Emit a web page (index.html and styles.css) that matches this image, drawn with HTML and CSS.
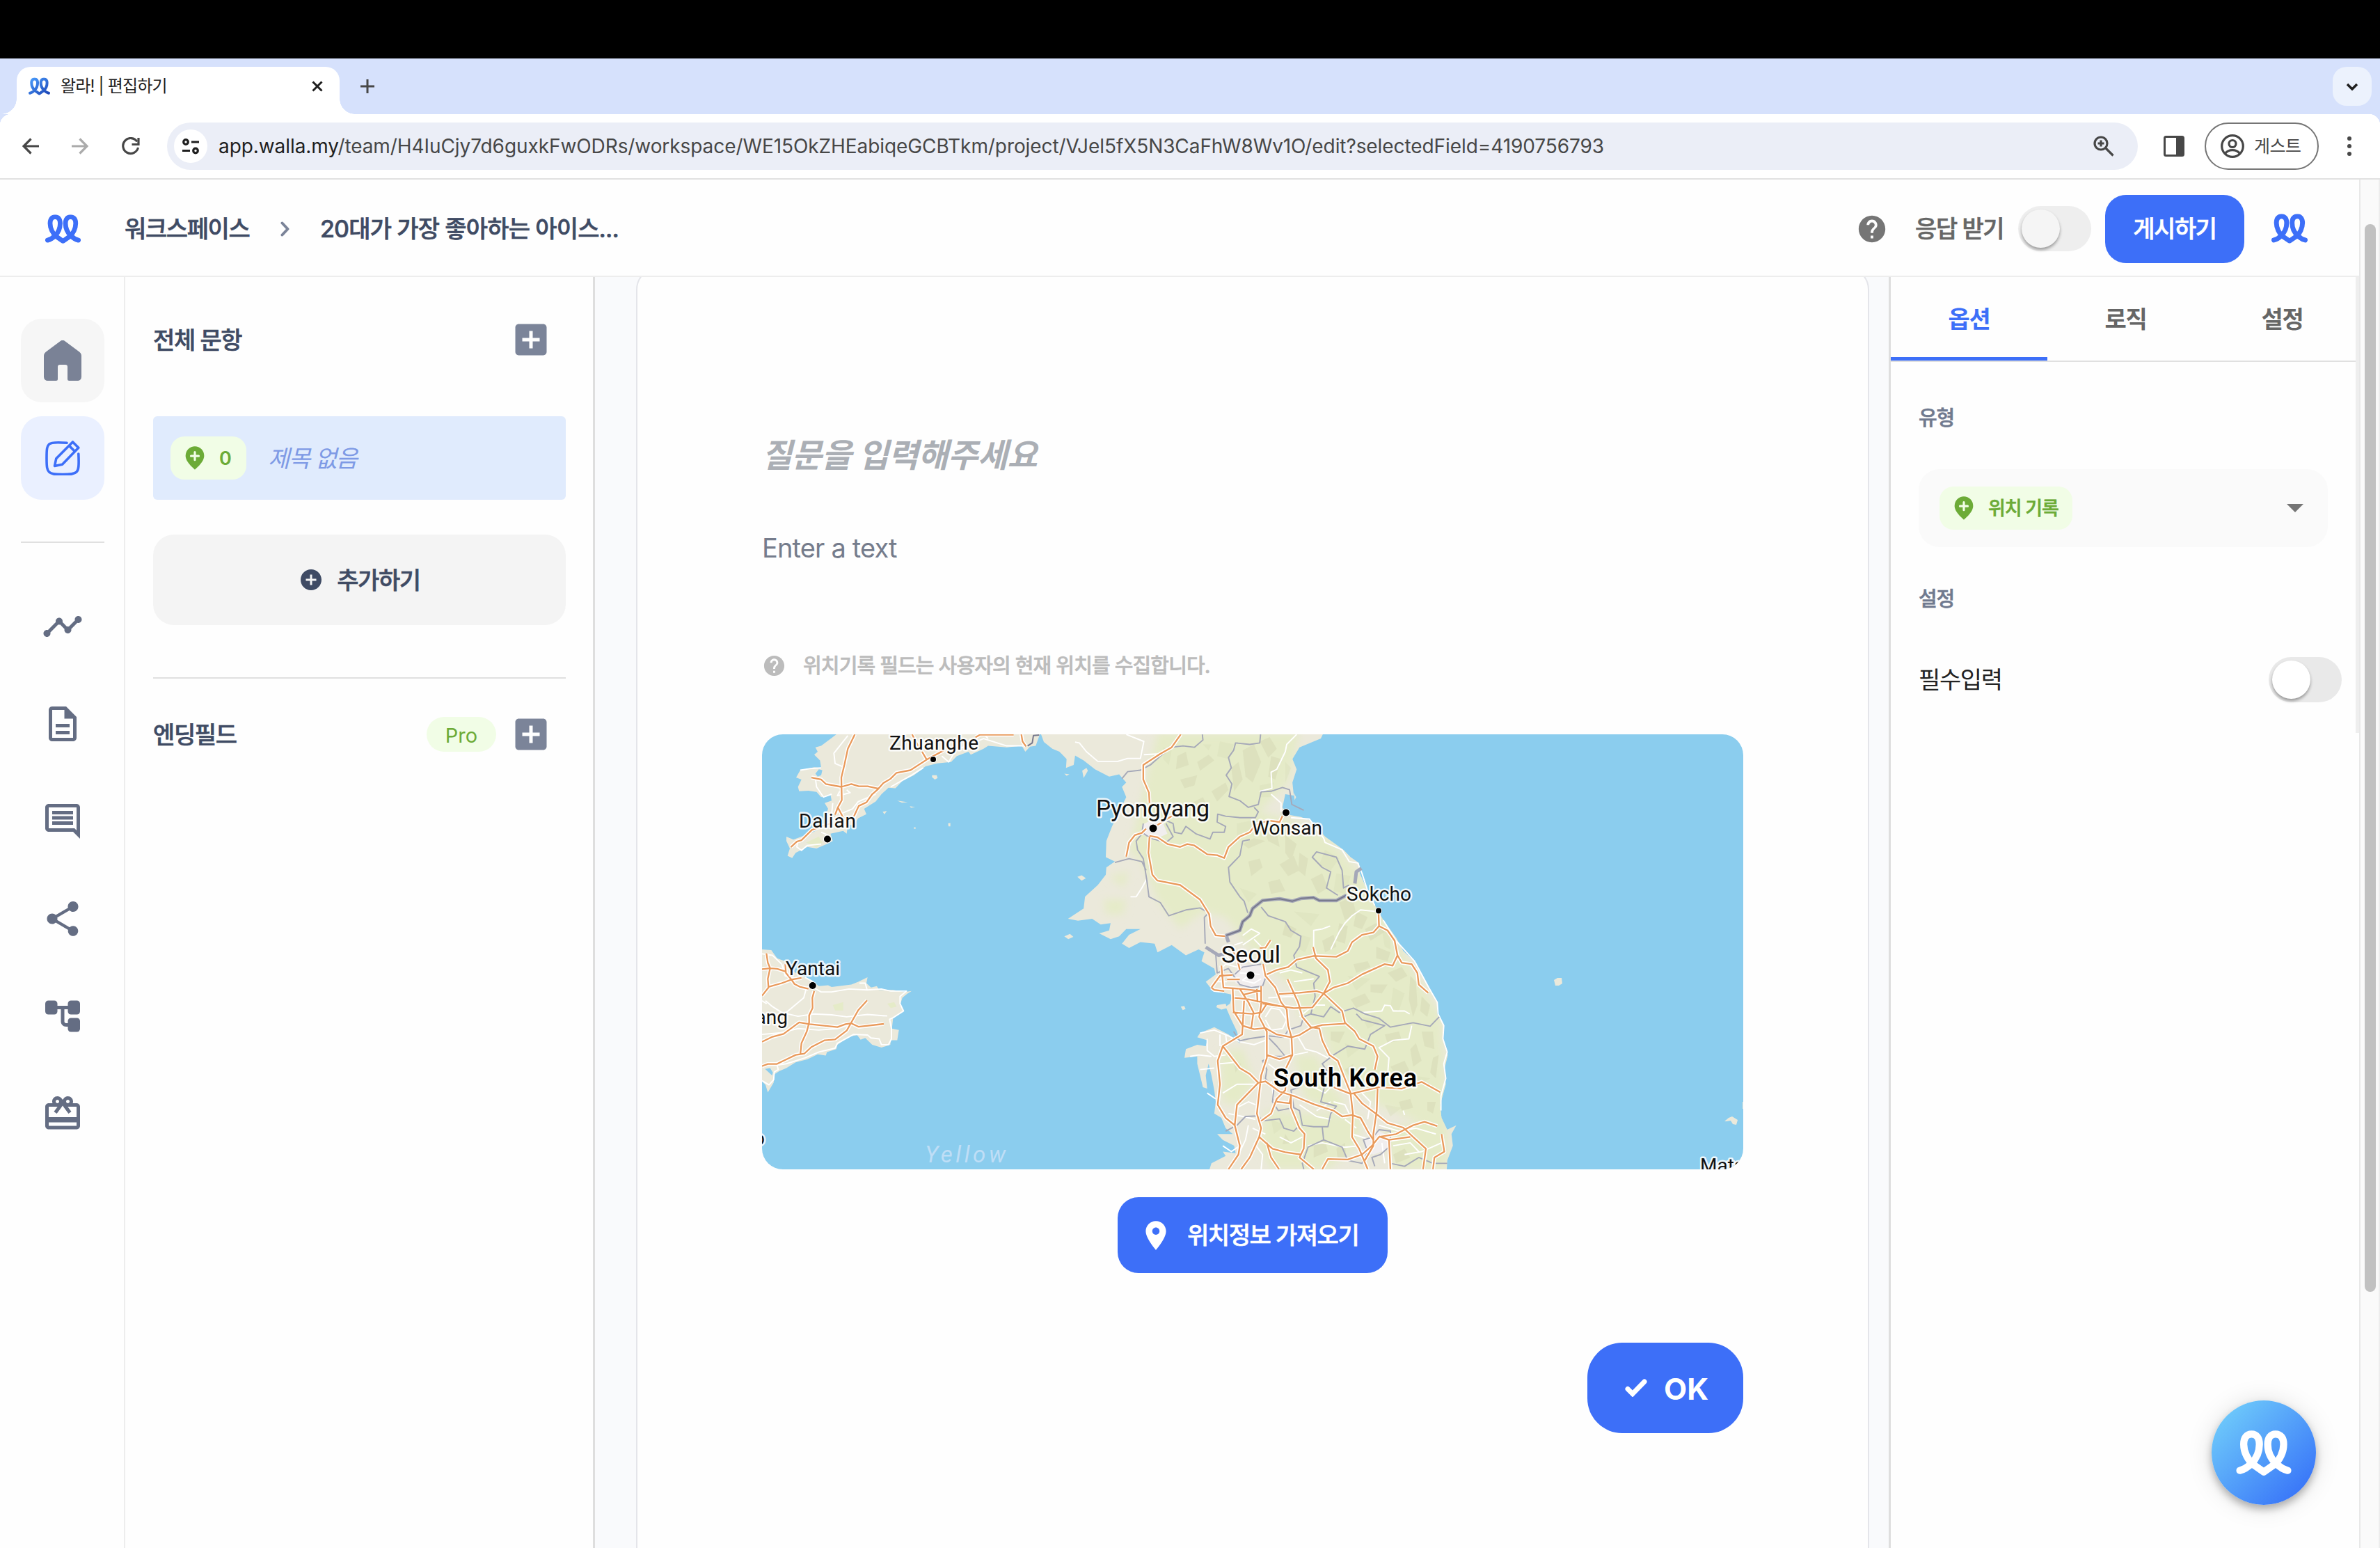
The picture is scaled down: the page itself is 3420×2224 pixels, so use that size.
FILE: index.html
```html
<!DOCTYPE html>
<html lang="ko">
<head>
<meta charset="utf-8">
<title>왈라! | 편집하기</title>
<link rel="stylesheet" href="styles.css">
</head>
<body>
<svg class="sprite" width="0" height="0" aria-hidden="true">
  <defs>
    <linearGradient id="favGrad" x1="0" y1="0" x2="1" y2="1"><stop offset="0" stop-color="#4a9bfb"/><stop offset="1" stop-color="#1c47b8"/></linearGradient>
    <symbol id="walla" viewBox="0 0 240 196">
      <path fill="none" stroke-linecap="round" stroke-linejoin="round" d="M16 174C32 170 48 162 66 144C86 124 101 95 101 60C101 32 88 16 67 16C46 16 33 32 33 60C33 95 52 130 74 148L120 180L166 148C188 130 206 95 206 60C206 32 192 16 171 16C150 16 137 32 137 60C137 95 152 124 174 144C192 162 208 170 224 174"/>
    </symbol>
    <symbol id="help" viewBox="0 0 24 24"><path d="M12 2C6.48 2 2 6.48 2 12s4.48 10 10 10 10-4.48 10-10S17.52 2 12 2zm1 17h-2v-2h2v2zm2.07-7.75-.9.92C13.45 12.9 13 13.5 13 15h-2v-.5c0-1.1.45-2.1 1.17-2.83l1.24-1.26c.37-.36.59-.86.59-1.41 0-1.1-.9-2-2-2s-2 .9-2 2H8c0-2.210 1.790-4 4-4s4 1.790 4 4c0 .88-.36 1.680-.93 2.250z"/></symbol>
    <symbol id="addbox" viewBox="0 0 24 24"><path d="M19 3H5c-1.110 0-2 .9-2 2v14c0 1.100.89 2 2 2h14c1.100 0 2-.9 2-2V5c0-1.100-.9-2-2-2zm-2 10h-4v4h-2v-4H7v-2h4V7h2v4h4v2z"/></symbol>
    <symbol id="addpin" viewBox="0 0 24 24"><path d="M12 2c-4.200 0-8 3.220-8 8.200 0 3.320 2.670 7.250 8 11.800 5.330-4.550 8-8.480 8-11.800C20 5.220 16.200 2 12 2z"/><path d="M12 7v6.600M8.700 10.300h6.600" fill="none" stroke="#f1fde6" stroke-width="1.900" stroke-linecap="round"/></symbol>
  </defs>
</svg>

<div class="menubar"></div>

<div class="tabstrip">
  <div class="tab">
    <svg class="favicon" viewBox="0 0 240 196"><use href="#walla"/></svg>
    <span class="tab-title">왈라! | 편집하기</span>
    <svg class="tab-close" viewBox="0 0 16 16"><path d="M1.500 1.500l13 13M14.500 1.500l-13 13"/></svg>
  </div>
  <svg class="tab-new" viewBox="0 0 20 20"><path d="M10 0v20M0 10h20"/></svg>
  <div class="tab-search"><svg viewBox="0 0 18 11"><path d="M2 2l7 7 7-7"/></svg></div>
</div>

<div class="toolbar">
  <svg class="nav-icon" viewBox="0 0 24 24"><path d="M24 12H2M12.500 1.500L2 12l10.500 10.500"/></svg>
  <svg class="nav-icon nav-forward" viewBox="0 0 24 24"><path d="M0 12h22M11.500 1.500L22 12 11.500 22.500"/></svg>
  <svg class="nav-icon nav-reload" viewBox="0 0 26 26"><path d="M22 6.500A11 11 0 1 0 23.500 15"/><path d="M24 1v9.500h-9.500"/></svg>
  <div class="omnibox">
    <div class="site-info"><svg viewBox="0 0 24 24"><circle cx="5" cy="6" r="3.300"/><path d="M13 6h11M0 18.500h11"/><circle cx="19" cy="18.500" r="3.300"/></svg></div>
    <span class="url"><b>app.walla.my</b>/team/H4IuCjy7d6guxkFwODRs/workspace/WE15OkZHEabiqeGCBTkm/project/VJel5fX5N3CaFhW8Wv1O/edit?selectedField=4190756793</span>
    <svg class="magnifier" viewBox="0 0 30 30"><circle cx="11" cy="11" r="9"/><path d="M18 18l10.500 10.500M11 6.500v9M6.500 11h9"/></svg>
  </div>
  <svg class="side-panel" viewBox="0 0 30 30"><rect x="1.500" y="1.500" width="27" height="27" rx="2"/><path d="M18 1h10v28H18z"/></svg>
  <div class="guest">
    <svg viewBox="0 0 34 34"><circle cx="17" cy="17" r="15.300"/><circle cx="17" cy="13.500" r="5"/><path d="M6.500 27.500c5-6.500 16-6.500 21 0"/></svg>
    <span>게스트</span>
  </div>
  <svg class="kebab" viewBox="0 0 8 30"><circle cx="4" cy="4" r="3"/><circle cx="4" cy="15" r="3"/><circle cx="4" cy="26" r="3"/></svg>
</div>

<div class="page">
  <div class="app">
    <header class="header">
      <svg class="logo" viewBox="0 0 240 196"><use href="#walla"/></svg>
      <span class="crumb">워크스페이스</span>
      <svg class="crumb-sep" viewBox="0 0 13 22"><path d="M2.500 2.500L10.500 11l-8 8.500"/></svg>
      <span class="crumb crumb-current">20대가 가장 좋아하는 아이스...</span>
      <div class="header-actions">
        <svg class="header-help"><use href="#help"/></svg>
        <span class="accept">응답 받기</span>
        <div class="switch switch-disabled"><i></i></div>
        <button class="publish">게시하기</button>
        <svg class="logo logo-right" viewBox="0 0 240 196"><use href="#walla"/></svg>
      </div>
    </header>

    <div class="workspace">
      <nav class="rail">
        <a class="rail-btn"><svg class="home" viewBox="0 0 54 58"><path d="M23.500 1.200a5.500 5.500 0 0 1 7 0L51 16.500a7 7 0 0 1 3 5.500v30.500a5.500 5.500 0 0 1-5.500 5.500H36.500a2.500 2.500 0 0 1-2.500-2.500V38a3 3 0 0 0-3-3h-8a3 3 0 0 0-3 3v17.500a2.500 2.500 0 0 1-2.500 2.500H5.500A5.500 5.500 0 0 1 0 52.500V22a7 7 0 0 1 3-5.500z"/></svg></a>
        <a class="rail-btn rail-active"><svg class="edit" viewBox="0 0 50 50"><path d="M31 3.300C19 2.300 8.500 2.300 5.500 5.200S2 12 2 25s.5 17 3.500 20S13 48.500 25 48.500 42 48 45 45s3.600-8.500 2.800-26"/><path d="M13.500 36.500l2.300-10.800L39.500 2l8.300 8.200L24.500 34.200zM34.500 7.500l8 8"/></svg></a>
        <div class="rail-line"></div>
        <a class="rail-item"><svg viewBox="0 0 24 24"><path d="M23 8c0 1.100-.9 2-2 2-.18 0-.35-.02-.51-.07l-3.560 3.550c.05.16.07.34.07.52 0 1.100-.9 2-2 2s-2-.9-2-2c0-.18.02-.36.07-.52l-2.550-2.550c-.16.05-.34.07-.52.07s-.36-.02-.52-.07l-4.550 4.560c.05.16.07.33.07.51 0 1.100-.9 2-2 2s-2-.9-2-2 .9-2 2-2c.18 0 .35.02.51.07l4.560-4.550C8.020 9.360 8 9.180 8 9c0-1.100.9-2 2-2s2 .9 2 2c0 .18-.02.36-.07.52l2.550 2.550c.16-.05.34-.07.52-.07s.36.02.52.07l3.550-3.560C19.020 8.350 19 8.180 19 8c0-1.100.9-2 2-2s2 .9 2 2z"/></svg></a>
        <a class="rail-item"><svg viewBox="0 0 24 24"><path d="M8 16h8v2H8zm0-4h8v2H8zm6-10H6c-1.100 0-2 .9-2 2v16c0 1.100.89 2 1.990 2H18c1.100 0 2-.9 2-2V8l-6-6zm4 18H6V4h7v5h5v11z"/></svg></a>
        <a class="rail-item"><svg viewBox="0 0 24 24"><path d="M21.990 4c0-1.100-.89-2-1.990-2H4c-1.100 0-2 .9-2 2v12c0 1.100.9 2 2 2h14l4 4-.01-18zM20 4v13.170L18.830 16H4V4h16zM6 12h12v2H6zm0-3h12v2H6zm0-3h12v2H6z"/></svg></a>
        <a class="rail-item"><svg viewBox="0 0 24 24"><path d="M18 16.080c-.76 0-1.440.3-1.960.77L8.910 12.700c.05-.23.09-.46.09-.7s-.04-.47-.09-.7l7.050-4.110c.54.5 1.250.81 2.040.81 1.660 0 3-1.340 3-3s-1.340-3-3-3-3 1.340-3 3c0 .24.04.47.09.7L8.040 9.810C7.500 9.310 6.790 9 6 9c-1.660 0-3 1.340-3 3s1.340 3 3 3c.79 0 1.500-.31 2.040-.81l7.120 4.160c-.05.21-.08.43-.08.65 0 1.610 1.310 2.920 2.920 2.920s2.920-1.310 2.920-2.920-1.310-2.920-2.920-2.920z"/></svg></a>
        <a class="rail-item"><svg viewBox="0 0 24 24"><rect x="2" y="3" width="7" height="8" rx="1.800"/><rect x="15" y="3" width="7" height="8" rx="1.800"/><rect x="15" y="13" width="7" height="8" rx="1.800"/><path d="M8 6h8v2h-3v7c0 .6.400 1 1 1h2v2h-2c-1.700 0-3-1.300-3-3V8H8z"/></svg></a>
        <a class="rail-item"><svg viewBox="0 0 24 24"><path d="M20 6h-2.180c.11-.31.18-.65.18-1 0-1.660-1.340-3-3-3-1.050 0-1.960.54-2.500 1.350l-.5.67-.5-.68C10.960 2.540 10.050 2 9 2 7.340 2 6 3.340 6 5c0 .35.07.69.18 1H4c-1.110 0-1.990.89-1.990 2L2 19c0 1.110.89 2 2 2h16c1.110 0 2-.89 2-2V8c0-1.110-.89-2-2-2zm-5-2c.55 0 1 .45 1 1s-.45 1-1 1-1-.45-1-1 .45-1 1-1zM9 4c.55 0 1 .45 1 1s-.45 1-1 1-1-.45-1-1 .45-1 1-1zm11 15H4v-2h16v2zm0-5H4V8h5.080L7 10.830 8.620 12 11 8.760l1-1.360 1 1.360L15.380 12 17 10.830 14.920 8H20v6z"/></svg></a>
      </nav>

      <aside class="fields">
        <div class="fields-head"><h2>전체 문항</h2><svg class="addbox"><use href="#addbox"/></svg></div>
        <div class="question">
          <span class="q-badge"><svg><use href="#addpin"/></svg>0</span>
          <em>제목 없음</em>
        </div>
        <button class="add"><svg viewBox="0 0 24 24"><path d="M12 2C6.480 2 2 6.480 2 12s4.480 10 10 10 10-4.480 10-10S17.520 2 12 2zm5 11h-4v4h-2v-4H7v-2h4V7h2v4h4v2z"/></svg><span>추가하기</span></button>
        <div class="fields-head fields-ending"><h2>엔딩필드</h2><span class="pro">Pro</span><svg class="addbox"><use href="#addbox"/></svg></div>
      </aside>

      <main class="canvas">
        <section class="card">
          <h1 class="q-title">질문을 입력해주세요</h1>
          <p class="q-desc">Enter a text</p>
          <div class="hint"><svg><use href="#help"/></svg><span>위치기록 필드는 사용자의 현재 위치를 수집합니다.</span></div>
          <svg class="map" viewBox="0 0 1410 625">
            <defs>
              <filter id="soft" x="-20%" y="-20%" width="140%" height="140%"><feGaussianBlur stdDeviation="14"/></filter>
              <path id="korea" d="M-12 30L0 62 30 85 55 95 80 120 78 150 105 140 110 108 140 125 180 155 230 180 265 172 290 200 275 215 290 250 270 290 240 350 220 400 218 455 250 470 220 490 218 515 190 550 145 590 140 630 85 665 120 672 170 665 200 685 235 680 230 705 195 715 235 735 265 725 290 700 340 700 300 720 275 750 300 765 340 745 390 750 400 780 450 755 500 790 545 770 565 780 555 810 600 835 605 855 570 880 590 905 620 915 665 925 655 955 640 965 660 1010 680 1050 690 1090 650 1060 600 1035 550 1055 540 1070 575 1080 570 1100 540 1095 500 1110 495 1140 540 1135 540 1160 550 1200 560 1240 575 1245 570 1200 580 1160 590 1200 600 1250 605 1290 600 1330 625 1345 640 1380 665 1400 610 1400 630 1420 670 1440 675 1465 630 1460 640 1475 590 1500 580 1530H1418L1420 1490 1440 1440 1435 1400 1452 1370 1420 1385 1400 1345 1395 1300 1415 1230 1410 1180 1422 1130 1405 1080 1408 1025 1385 990 1385 950 1355 900 1310 815 1265 775 1240 730 1195 670 1160 610 1135 560 1112 510 1110 475 1080 455 1055 430 990 385 940 330 905 318 860 310 840 285 850 240 880 245 875 200 890 155 875 120 900 80 975 50 985 30z"/>
              <clipPath id="koreaClip"><use href="#korea"/></clipPath>
              <g id="highwaysWest">
                <path d="M445 36L415 85 400 140 387 183 389 260 372 285 360 310M372 285L395 320M258 183L300 190 320 205 387 215 430 205 462 213 500 213 548 221M830 90L755 122 685 158 625 167 598 188 568 202 545 223 520 240 495 268 462 280 440 318M755 122L735 95M692 36L718 75M965 46L985 37H1130M1163 36L1168 60 1183 77M340 340L300 350 260 362 215 397 195 402 170 420M45 837L80 834 110 836 145 845M64 783L70 815 80 834 70 870 73 900 45 928M73 898L130 885 172 873 215 867M145 820L148 850 172 873 185 888 210 898 245 904M270 912L262 935 263 970 248 995 248 1020 238 1050 215 1090 210 1130M45 1085L90 1068 138 1058 205 1019 250 1025 370 1035 405 1025 430 1022 462 1034 570 1024M45 1168L70 1161H108L150 1145 190 1130 228 1125 258 1103 315 1080 360 1077 410 1047 460 977 498 944"/>
              </g>
              <g id="highways">
                <path d="M482 36L450 80 410 102 350 140V190L370 235 372 270M372 385L368 440 382 515 400 535 480 550 550 600 582 650 587 690 605 722 638 725M372 382L400 387 435 410 480 420 505 410 530 415 575 445 610 448 635 458 650 420 690 385 725 370 745 345 790 330 830 335 840 315M290 453L300 405 320 380 345 372 360 358M400 345L450 315"/>
                <path d="M1178 640L1180 690 1210 705 1235 740 1245 790 1260 815 1295 820 1315 850 1320 890 1353 918M1180 690L1160 712 1120 720 1085 745 1070 775 1030 795 950 792 890 805 860 830 820 840 785 855M948 762L958 800 1000 840 1007 880 985 920 1050 980 1060 1020 1095 1050 1110 1075 1160 1100 1175 1135 1165 1180M1245 790L1228 825 1200 820 1120 855 1070 885 1020 900 985 920 945 968 880 970 830 963 770 955M985 920L960 912 900 918 828 922M858 872L895 950 910 1000 940 1035 970 1040 980 1080 1005 1130 1035 1150 1055 1200 1080 1260"/>
                <path d="M772 820L780 860 815 900 835 950 855 975 860 1030 872 1070 875 1130 850 1180M872 1070L900 1062 940 1038 980 1028 1060 1023M590 900L620 860 665 857M625 825L632 900 700 905 765 912M665 905L668 980 700 1030 698 1060 630 1100 612 1150 620 1230 612 1300 640 1345 672 1370 690 1440 685 1470 650 1520M672 935L720 940 830 963M690 905L720 950 738 985 730 1040M665 985L735 990 765 985 785 955M705 945L700 1030 740 1042 780 1038 820 1060 872 1070M765 895V960L758 1000 785 1050V1140L765 1200 750 1330 765 1380 758 1410 725 1480 695 1520M750 905L752 950M590 900L600 908 635 912M660 765L680 800 690 840M760 765L780 765 798 738M645 872H690M700 925L760 910M785 1130L830 1145 875 1130M630 1100L690 1175 725 1195 755 1225 780 1220 830 1255 880 1270 950 1298 1020 1320 1050 1340 1085 1335 1115 1345 1140 1390 1160 1420M755 1225L680 1300 672 1370M765 1355L800 1330 820 1280 850 1250 855 1180M870 1270L870 1310 900 1380 918 1400 915 1450 900 1480 950 1520M820 1290L865 1295 870 1270"/>
                <path d="M758 1410L805 1450 850 1462 905 1470M785 1430L800 1480 828 1520M980 1520L1000 1485 1070 1487 1120 1470 1155 1440 1180 1410 1240 1400 1300 1370 1340 1358 1385 1373M1020 1240L1080 1263 1180 1240 1260 1245 1330 1222 1395 1257M1080 1263L1088 1330 1085 1410 1110 1450 1140 1520M1090 1260L1120 1295 1175 1335 1210 1362 1265 1378 1300 1410 1345 1450 1335 1520M1175 1245L1172 1320 1160 1400 1160 1440 1130 1490M1180 1408L1215 1420 1220 1520M1215 1420L1290 1410M1400 1400L1410 1460 1375 1480 1370 1520"/>
              </g>
            </defs>
            <rect class="sea" width="1410" height="625"/>
            <g transform="translate(-15 -15) scale(.33333 .42091)">
              <path class="land" d="M375 30L350 45 300 75 275 80 285 95 270 105 295 125 300 150 270 148 210 158 192 183 215 190 200 215 205 230 245 228 280 232 300 250 340 240 345 262 315 270 330 290 320 310 330 345 250 375 215 385 180 395 150 385V400L165 425 155 450 175 458 190 440 215 430 240 420 280 425 330 408 350 400 340 375 395 365 410 375 415 345 440 345 460 322 495 308 485 290 535 265 560 240 590 218 620 220 650 195 700 175 750 145 800 135 860 130 885 110 935 95 945 105 1000 85 1020 75 1100 80 1165 75 1180 95 1200 78 1225 75 1245 30zM45 770L85 772 110 800 145 810 165 840 230 865 265 880 290 895 330 892 345 898 430 890 460 880 500 865 495 885 515 900 540 895 550 908 610 908 660 915 690 912 670 922 650 935 640 960 657 980 610 1005 605 1040 635 1045 628 1080 600 1080 598 1095 560 1105 520 1095 490 1072 470 1078 455 1062 420 1068 370 1095 365 1110 325 1120 320 1132 285 1128 240 1145 190 1155 150 1175 120 1185 100 1195 95 1225 70 1258 60 1232 45 1220zM778 175l20 0 4 10-12 5-12-8zM628 262l45 5-25 2zM682 281l23 3-18 2zM565 300l18-3-10 12zM847 340l10-2v12h-8zM700 353h7v5h-7z"/>
              <path class="sea" d="M275 170L290 155 305 158 300 175 285 180zM58 1178L80 1175 92 1190 88 1200z"/>
              <path class="woods" d="M350 960l45-10v28h-35zM585 955l30-5 10 15-25 5zM235 405l55-20 15 20-25 18z"/>
              <path class="road" d="M415 40L355 100 360 135 390 145M210 158L250 153 300 150M275 185L280 215 310 250 345 240M350 270L345 310 360 330M410 225L425 235 400 240 370 245 380 230M390 305L435 290 460 265 535 240M600 215L690 175 740 150M820 110L850 130 880 90 940 70 1000 50 1100 75 1175 75M1000 36L1020 50M200 400L195 420 215 432 240 415 300 410M300 370L330 380 310 395M45 785L90 790 130 820M130 820L145 860 190 870M230 865L265 880 235 905 225 935 150 985M60 945L90 965 130 985 200 998 270 990 345 993 410 1000 500 992 585 997M45 945L65 955M45 1060L120 1055 200 1040 290 1045 370 1040 430 1025M255 895L300 915 345 915 420 905 500 908M465 885H490L498 908M500 908L560 905 600 912 668 912 640 930 640 955 655 980 610 1003 595 1008 603 1040V1075L590 1095H560L550 1075 515 1072 500 1062 440 1060 370 1090 360 1107 290 1120 230 1140 150 1160 110 1165 115 1180 98 1188 95 1215 75 1232 45 1218"/>
              <g class="casing"><use href="#highwaysWest"/></g>
              <g class="highway"><use href="#highwaysWest"/></g>
              <path class="border" d="M1240 38L1215 40 1210 65 1190 75"/>
            </g>
            <g transform="translate(405 -15) scale(.40816 .42091)">
              <use class="land" href="#korea"/>
              <path class="land" d="M135 160l15-10 5 10-15 25zM72 170l18 2-10 5zM118 522l15-5 15 10-15 8zM72 725l20-8 12 10-18 8zM482 965l12-2 5 10-10 4zM610 960l30-5 5 15-20 5-18-8zM880 235l8 15-5 10z"/>
              <g clip-path="url(#koreaClip)">
                <g filter="url(#soft)" class="woods">
                  <path d="M400 30L900 30 860 200 760 300 880 330 1000 390 1120 520 1250 760 1400 1000 1420 1400 1300 1350 1180 1300 1030 1200 980 1040 900 1000 880 900 780 820 720 760 640 660 560 640 480 700 400 600 340 460 300 440 200z"/>
                  <path d="M620 1120L700 1110 740 1220 690 1300 630 1290zM880 1130L960 1130 1000 1220 1060 1290 1040 1330 920 1280zM780 1320L1120 1340 1100 1450 1000 1520H800L760 1440zM1200 1380L1420 1350V1520H1230zM230 520L300 505 280 560zM210 600L290 600 280 650 220 650z"/>
                </g>
                <path class="hills" d="M470 110l30-15 10 45-45 15zM540 130l40-25 20 20-50 35zM700 90l40-20 25 60-30 70-25-20zM760 60l35-15 25 40-30 30zM800 110l35 10-20 70-25-10zM660 150l25-20 15 60-30 40zM480 190l60-15-10 35-35 10zM590 230l50-30 10 25-40 40zM520 270l40-20 15 30-40 20zM700 410l40-20 40 10-60 25zM770 350l50 20 10 50-40-20zM850 380l40 30-20 60-20-30zM720 470l40-10 10 30-40 30zM830 480l50-30 20 50-40 20zM900 440l30 20-10 60-25-20zM940 530l40-20 20 50-35 20zM790 540l40-10 20 40-50 10zM1040 610l45-20 15 60-40 20zM1100 640l40 20-20 40-30-10zM1130 700l40-20 30 30-50 30zM1040 680l30 10-10 60-30-10zM980 740l40-20 10 40-40 20zM850 680l40 20-20 30-30-10zM1170 760l50 20-10 30-40-10zM1090 820l50-10 10 20-50 20zM1210 850l50-20 20 30-40 20zM1150 890l60 0-20 30-40-5zM1290 860l20 20 5 80-15 40-15-60zM1330 930l30 30-10 40-25-20zM1080 940l50-20 20 30-50 20zM1010 1050l50 0-20 40-30-10zM1200 1060l50-10 10 30-50 10zM1330 1050l40 0 5 60-35-10zM1290 1110l20-20 20 60-30 20zM1370 1140l20-10-10 80-20-20zM1220 1170l50-20 20 40-50 10zM1250 1290l40-10 10 30-40 10zM1350 1290l30 0-10 40-20-10zM850 1400l20 30-30 5zM950 1440l40-20 10 40-50 20zM1030 1450l30-20 5 60-30 0zM1230 1470l40-20 20 30-50 20zM1060 1180l30-20-10 50zM930 1190l30 20-20 20zM670 1160l25 0-20 30z"/>
                <path class="hills hills-light" d="M620 60l50 10-20 50-40-10zM560 70l30 0-10 20zM420 80l30 10-10 50-20-20zM760 210l50-10-10 50-40 0zM850 130l20 20-20 50zM680 340l50-10 0 40-50 10zM990 430l50 30-30 40-40-20zM1030 510l50 10-20 60-40-10zM690 560l60 20-30 30zM880 640l90 10-30 40zM1190 700l30 20 0 50-20-10zM900 720l40 10-20 50-20-10zM1070 860l80 10-50 40zM1230 900l40 20-20 60-30-10zM1120 1000l80 10-60 30zM1060 1090l50 20-40 30zM1300 1200l60 10-50 30zM1200 1300l60 10-40 30zM800 1350l50 20-40 30z"/>
              </g>
              <path class="urban" d="M670 850L700 820 760 825 785 860 770 895 710 900 675 885zM345 345L385 325 420 340 435 375 400 390 350 380zM1130 1420L1180 1390 1220 1410 1215 1450 1160 1470 1130 1460z"/>
              <path class="road" d="M110 62L125 65 150 95 190 128 260 128 295 118H340L352 60 290 36M890 36L855 70 850 95 820 155 800 165 803 220 760 230M800 240L835 270 835 300M352 105L410 102M870 320L935 325 985 390 990 405 1050 430 1075 470 1105 475 1120 510 1140 570 1165 620M305 590H325L345 560 362 530M1165 640L1115 635 1085 655 1060 680 1040 710 1020 750 1010 770M1008 690L980 700 950 705 950 760M1195 670L1240 740 1305 810 1355 900 1385 950 1388 990 1408 1030 1405 1075 1420 1120 1408 1160 1415 1210 1398 1270V1320M1288 990L1270 980 1230 980 1220 962 1200 960 1190 980 1120 985M1295 1030L1285 1075 1230 1080 1180 1105 1215 1140 1210 1200M550 1055L600 1045 650 1065 690 1085 740 1095 780 1080M575 1075V1115L600 1135 640 1130M620 1060V1100M640 1060L645 1100M515 1135L545 1130 590 1135M550 1180L600 1175M700 755L760 715 730 700 700 722M670 755L700 745M740 735L765 760M830 850L870 840 910 850M880 880L950 870M790 935L870 930 895 935M780 1000L800 970 830 975 855 1010 840 1040 800 1045 780 1010M890 1060L920 1110 960 1120 1000 1140M900 1000L950 960 990 960M620 1160L680 1155M630 1260L680 1230 750 1230M680 1310L720 1290 745 1300M650 1330L700 1340 745 1350M575 1260L605 1280M630 1440L660 1460 690 1440M720 1370L710 1420 690 1460M735 1380L780 1400M740 1430L770 1470 765 1520M790 1160L830 1190 870 1210 900 1240M880 1130L930 1120M930 1230L990 1260 1010 1240M1020 1290L1060 1300 1080 1340M1120 1260L1150 1290 1140 1350M1060 1350L1100 1380M1180 1370L1250 1390 1310 1380 1380 1400M1230 1440L1290 1430 1320 1460M1270 1470L1330 1460 1400 1430M830 1410L870 1430 910 1410M930 1440L980 1430 1060 1445 1110 1440M960 1320L1010 1290M800 1220L810 1280M1265 1320L1270 1335M900 1300L960 1340 1010 1350M680 830L640 820 620 840M705 800L735 815M650 760L640 790 660 810M645 880L610 880M720 860L700 875 740 885 765 870M690 850L760 855M1085 1400L1150 1420M1190 1430L1200 1500"/>
              <path class="admin" d="M275 187L295 163 340 158 375 140 410 110 450 80 490 75 530 80 560 55 558 36M763 36L760 65 725 70 675 65 668 90 650 115 660 150 642 175 662 205 652 248 690 262 720 285 755 275 765 232 800 230 840 217 865 225 873 275 915 295M740 285L755 300 745 320 690 320 640 315 612 308 610 335 640 350 635 370 595 370 585 393 535 375 500 350 485 375 460 370 455 340 430 330M350 340L345 375 325 400 330 430 350 460 362 530 370 590 410 610 440 655 500 635 550 628 580 645 565 660 568 750M430 340L455 385 430 405 375 390 345 370M250 473L300 460 345 470 360 500M725 395L700 400 690 450 650 490 655 540 690 590 705 605 718 645M1075 550L1055 560 1050 500 1030 455 960 437 945 455 980 490 1010 505 995 560 1035 585M765 625L790 655 850 675 870 705 905 725 900 760 880 790 890 830 970 862 950 885 955 930 940 990 985 1000 1010 965 1040 985 1090 970 1130 990 1180 1005 1220 1035 1300 1020 1360 1032 1392 1000M605 785L610 850 650 835 672 865 690 890 730 900 770 895 785 855 770 820M672 855L700 830 765 820M940 990L915 1000 905 1030 860 1045 845 1070 790 1065 720 1075 690 1082 668 1050M1100 990L1120 1010 1200 1030 1150 1060 1130 1110 1070 1100 1020 1130 980 1160 1000 1190M790 1070L820 1100 850 1135 800 1135 770 1150 785 1180 780 1210 810 1245 805 1290 825 1320 880 1310 870 1250 900 1240M970 1190L990 1230 975 1290 1030 1305 1010 1330 1000 1375 950 1375 910 1370 900 1320 880 1310M640 1390L680 1370 710 1340 755 1338 770 1355 830 1348 845 1380 880 1390 900 1370M980 1375L985 1420 930 1445 910 1500 915 1520M985 1420L1050 1445 1070 1490 1120 1500 1140 1460 1125 1420 1160 1410 1180 1385 1220 1390 1220 1440 1185 1470 1155 1480 1165 1510M1220 1500L1270 1510 1320 1480 1370 1500 1420 1500"/>
              <path class="dmz" d="M570 762L615 790 635 785M650 745L642 722 690 705 700 675 725 655 735 630 770 603 830 597 875 605 905 596 950 593 970 603 1030 603 1065 585M1095 545L1100 505 1118 493"/>
              <g class="casing"><use href="#highways"/></g>
              <g class="highway"><use href="#highways"/></g>
              <path class="border" d="M642 722L690 705 700 675 725 655 735 630 770 603 830 597 875 605 905 596 950 593 970 603 1030 603 1065 585"/>
            </g>
            <path class="land" d="M1138 353l5-3h6l1 8-5 3h-5zM1383 556l6-5 5-2 8 5-2 7-5-1-3-5-6 1zM1409 528h1v10h-1z"/>
            <g class="dots">
              <circle cx="246" cy="36" r="4"/><circle cx="94" cy="150.500" r="5"/><circle cx="72.700" cy="361" r="5"/><circle cx="562" cy="135" r="5.500"/><circle cx="753" cy="112.500" r="5"/><circle cx="886" cy="253.500" r="4"/><circle cx="702" cy="346" r="5.500"/>
            </g>
            <g class="labels">
              <text x="183" y="22" textLength="128">Zhuanghe</text>
              <text x="53" y="134" textLength="82">Dalian</text>
              <text x="34" y="346" textLength="78">Yantai</text>
              <text x="37" y="416" text-anchor="end">ang</text>
              <text x="4" y="590" text-anchor="end">o</text>
              <text x="704" y="144" textLength="101">Wonsan</text>
              <text x="840" y="239" textLength="93">Sokcho</text>
              <text x="1348" y="629">Mats</text>
              <text class="capital" x="480" y="118" textLength="163">Pyongyang</text>
              <text class="capital" x="660" y="328" textLength="85">Seoul</text>
              <text class="country" x="735" y="506" textLength="206">South Korea</text>
              <text class="ocean" x="234" y="615" textLength="116">Yellow</text>
            </g>
          </svg>
          <button class="locate"><svg viewBox="0 0 24 24"><path d="M12 2C8.130 2 5 5.130 5 9c0 5.250 7 13 7 13s7-7.750 7-13c0-3.870-3.130-7-7-7zm0 9.500c-1.380 0-2.500-1.120-2.500-2.500s1.120-2.500 2.500-2.500 2.500 1.120 2.500 2.500-1.120 2.500-2.500 2.500z"/></svg><span>위치정보 가져오기</span></button>
          <button class="ok"><svg viewBox="0 0 32 26"><path d="M4 14.500l7 7L28 4"/></svg><span>OK</span></button>
        </section>
      </main>

      <aside class="options">
        <div class="tabs"><span class="active">옵션</span><span>로직</span><span>설정</span></div>
        <div class="options-body">
          <h3>유형</h3>
          <div class="select"><span class="type-badge"><svg><use href="#addpin"/></svg>위치 기록</span><i class="caret"></i></div>
          <h3 class="h-settings">설정</h3>
          <div class="required"><span>필수입력</span><div class="switch"><i></i></div></div>
        </div>
      </aside>
      <div class="gutter"></div>
    </div>
  </div>
  <div class="scrollbar"><div class="thumb"></div></div>
</div>
<div class="fab"><svg viewBox="0 0 240 196"><use href="#walla"/></svg></div>
</body>
</html>
```
FILE: styles.css
```css
* { box-sizing: border-box; }
html, body { margin: 0; width: 3420px; height: 2224px; overflow: hidden; }
body {
  display: flex; flex-direction: column; background: #fefefe; position: relative;
  font-family: Inter, "Noto Sans CJK KR", sans-serif; color: #3f4b64; font-size: 34px; line-height: 1;
}
svg { display: block; flex: none; }
h1, h2, h3, p { margin: 0; }
button { border: 0; padding: 0; font: inherit; display: flex; align-items: center; }
span, em, h1, h2, h3, p { white-space: nowrap; }
.sprite { position: absolute; }

/* medium weight for Korean interface text */
.crumb, .accept, .publish, .fields-head h2, .add span, .hint span, .locate span,
.options h3, .type-badge, .tabs span { -webkit-text-stroke: .6px currentColor; }

/* browser chrome */
.menubar { height: 84px; background: #000; flex: none; }
.tabstrip { height: 80px; background: #d6e1fc; display: flex; padding: 12px 12px 0 24px; flex: none; }
.tab {
  position: relative; width: 464px; height: 68px; background: #fff; border-radius: 20px 20px 0 0;
  display: flex; align-items: center; padding: 0 24px 12px 17px;
}
.tab::before, .tab::after { content: ""; position: absolute; bottom: 0; width: 22px; height: 22px; }
.tab::before { left: -22px; background: radial-gradient(circle at 0 0, #d6e1fc 21.500px, #fff 22px); }
.tab::after { right: -22px; background: radial-gradient(circle at 100% 0, #d6e1fc 21.500px, #fff 22px); }
.favicon { width: 31px; height: 26px; stroke: url(#favGrad); stroke-width: 31; }
.tab-title { margin-left: 15px; font-size: 24px; letter-spacing: -.8px; color: #1f1f1f; flex: 1; }
.tab-close { width: 16px; height: 16px; stroke: #1f1f1f; stroke-width: 3; fill: none; }
.tab-new { width: 20px; height: 20px; margin: 18px 0 0 30px; stroke: #474747; stroke-width: 3; }
.tab-search {
  margin-left: auto; width: 56px; height: 56px; border-radius: 20px; background: #ecf2fd;
  display: flex; align-items: center; justify-content: center;
}
.tab-search svg { width: 18px; height: 11px; stroke: #1f1f1f; stroke-width: 3.500; fill: none; }
.toolbar {
  height: 94px; flex: none; border-bottom: 2px solid #e1e1e1; display: flex; align-items: center; padding: 0 40px 0 32px;
  background: radial-gradient(circle at 16px 16px, #fff 16px, #d6e1fc 16.500px) 0 0 / 16px 16px no-repeat,
    radial-gradient(circle at 0 16px, #fff 16px, #d6e1fc 16.500px) 100% 0 / 16px 16px no-repeat, #fff;
}
.nav-icon { width: 24px; height: 24px; stroke: #474747; stroke-width: 3.200; fill: none; }
.nav-forward { margin-left: 47px; stroke: #ababab; }
.nav-reload { margin-left: 48px; width: 26px; height: 26px; }
.omnibox {
  margin-left: 39px; width: 2832px; height: 68px; border-radius: 34px; background: #ebeef7;
  display: flex; align-items: center; padding: 0 34px 0 10px;
}
.site-info { width: 48px; height: 48px; border-radius: 50%; background: #fff; display: flex; align-items: center; justify-content: center; }
.site-info svg { width: 24px; height: 24px; fill: none; stroke: #1f1f1f; stroke-width: 3.200; }
.url { margin-left: 16px; font-size: 28px; letter-spacing: -.080px; color: #474747; flex: 1; }
.url b { font-weight: 400; color: #1f1f1f; }
.magnifier { width: 30px; height: 30px; fill: none; stroke: #474747; stroke-width: 3.200; }
.side-panel { width: 30px; height: 30px; margin-left: 37px; fill: none; stroke: #474747; stroke-width: 3; }
.side-panel path { fill: #474747; stroke: none; }
.guest {
  margin-left: 29px; width: 164px; height: 68px; border: 2px solid #757575; border-radius: 34px;
  display: flex; align-items: center; padding-left: 21px; font-size: 25px; letter-spacing: -.5px; color: #474747;
}
.guest svg { width: 34px; height: 34px; fill: none; stroke: #474747; stroke-width: 3.200; margin-right: 14px; }
.kebab { width: 8px; height: 30px; margin-left: 40px; fill: #474747; }

/* page frame */
.page { flex: 1; min-height: 0; display: flex; }
.app { width: 3390px; display: flex; flex-direction: column; }
.scrollbar { width: 30px; background: #fafafa; border-left: 2px solid #e8e8e8; border-right: 2px solid #ededed; padding: 64px 0 0 6px; }
.thumb { width: 16px; height: 1534px; border-radius: 8px; background: #c1c1c1; }

.header { height: 140px; flex: none; border-bottom: 2px solid #ededed; display: flex; align-items: center; padding: 3px 74px 0 65px; }
.logo { width: 51px; height: 42px; stroke: #3d6ff8; stroke-width: 32; }
.crumb { margin-left: 63px; width: 182px; font-weight: 500; letter-spacing: -1.400px; }
.crumb-sep { width: 13px; height: 22px; margin-left: 42px; fill: none; stroke: #7b8499; stroke-width: 4; stroke-linecap: round; stroke-linejoin: round; }
.crumb-current { margin-left: 44px; width: auto; letter-spacing: -.850px; }
.header-actions { margin-left: auto; display: flex; align-items: center; }
.header-help { width: 46px; height: 46px; fill: #757575; }
.accept { margin-left: 39px; width: 130px; font-weight: 500; letter-spacing: -1.400px; color: #666; }
.switch { width: 105px; height: 65px; border-radius: 33px; background: #e9e9e9; padding: 5px; }
.switch i { display: block; width: 55px; height: 55px; border-radius: 50%; background: #fff; box-shadow: 0 3px 4px rgba(0,0,0,.35); }
.switch-disabled { margin-left: 18px; background: #eee; }
.switch-disabled i { background: #f5f5f5; }
.publish { margin-left: 20px; width: 200px; height: 98px; border-radius: 30px; background: #3d6ff8; color: #fff; justify-content: center; font-weight: 500; letter-spacing: -1.400px; }
.logo-right { margin-left: 39px; width: 52px; height: 43px; }

.workspace { flex: 1; min-height: 0; display: flex; }

/* icon rail */
.rail { width: 180px; border-right: 2px solid #ededed; padding: 60px 0 0 30px; display: flex; flex-direction: column; }
.rail-btn { width: 120px; height: 120px; border-radius: 30px; background: #f6f6f6; display: flex; align-items: center; justify-content: center; margin-bottom: 20px; }
.rail-active { background: #eaf0ff; }
.home { width: 54px; height: 58px; fill: #7a8296; }
.edit { width: 50px; height: 50px; fill: none; stroke: #3d6ff8; stroke-width: 3.600; stroke-linejoin: round; stroke-linecap: round; }
.rail-line { width: 120px; height: 2px; background: #e0e0e0; margin: 40px 0 50px; }
.rail-item { width: 120px; height: 140px; display: flex; align-items: center; justify-content: center; }
.rail-item svg { width: 60px; height: 60px; fill: #646d83; }

/* question list */
.fields { width: 675px; border-right: 3px solid #dedede; padding: 60px 39px 0 40px; }
.fields-head { height: 60px; display: flex; align-items: center; padding-right: 20px; }
.fields-head h2 { font-size: 34px; font-weight: 500; letter-spacing: -1.400px; margin-right: auto; padding-top: 2px; }
.addbox { width: 60px; height: 60px; fill: #7b8499; }
.question { margin-top: 80px; width: 593px; height: 120px; border-radius: 6px; background: #e0ebfd; display: flex; align-items: center; padding-left: 25px; }
.q-badge { width: 109px; height: 62px; border-radius: 20px; background: #f1fde6; display: flex; align-items: center; padding-left: 15px; font-size: 27px; font-weight: 600; color: #6cab37; }
.q-badge svg, .type-badge svg { width: 40px; height: 40px; fill: #6cab37; margin-right: 15px; }
.question em { margin-left: 31px; padding-top: 2px; font-size: 34px; letter-spacing: -1.400px; color: #7e9ae5; }
.add { margin-top: 50px; width: 593px; height: 130px; border-radius: 30px; background: #f4f4f4; justify-content: center; color: #3f4b64; font-weight: 500; letter-spacing: -1.400px; }
.add svg { width: 36px; height: 36px; fill: #3f4b64; margin-right: 19px; }
.add span { padding-top: 2px; }
.fields-ending { margin-top: 75px; width: 593px; height: 162px; border-top: 2px solid #e0e0e0; }
.pro { width: 100px; height: 50px; border-radius: 25px; background: #f1fde6; color: #6cab37; font-size: 29px; display: flex; align-items: center; justify-content: center; margin-right: 20px; padding-top: 2px; }

/* canvas */
.canvas { width: 1859px; background: #f9fafc; padding: 0 28px 0 59px; overflow: hidden; }
.card {
  margin-top: -14px; width: 1772px; height: 1900px; background: #fefefe; border: 2px solid #e4e5ea; border-radius: 32px;
  display: flex; flex-direction: column; align-items: flex-start; padding: 230px 0 0 179px;
}
.q-title { height: 76px; line-height: 76px; font-size: 47px; font-weight: 700; font-style: italic; letter-spacing: -.500px; color: #abafb5; }
.q-desc { margin-top: 63px; height: 64px; line-height: 64px; font-size: 38px; letter-spacing: -.850px; color: #757c8c; }
.hint { margin-top: 108px; height: 128px; padding-bottom: 70px; display: flex; align-items: center; font-size: 29px; font-weight: 500; letter-spacing: -.850px; color: #bcbcbc; }
.hint svg { width: 35px; height: 35px; fill: #bcbcbc; margin-right: 24px; }
.map { width: 1410px; height: 625px; border-radius: 30px; overflow: hidden; }
.locate { margin: 40px 0 0 511px; width: 388px; height: 109px; border-radius: 30px; background: #3d6ff8; color: #fff; padding-left: 30px; font-weight: 500; letter-spacing: -1.450px; }
.locate svg { width: 50px; height: 50px; fill: #fff; margin-right: 20px; }
.ok { margin: 100px 0 0 1186px; width: 224px; height: 130px; border-radius: 50px; background: #3d6ff8; color: #fff; padding-left: 54px; font-size: 43px; font-weight: 700; }
.ok svg { width: 32px; height: 26px; fill: none; stroke: #fff; stroke-width: 7; stroke-linecap: round; margin-right: 24px; }
.ok span { padding-top: 2px; }

/* map artwork */
.sea { fill: #8bcdee; }
.land { fill: #ebe9db; }
.woods { fill: #e5ebc8; }
.hills { fill: #cfd3ae; opacity: .38; }
.hills-light { fill: #d8dcb8; opacity: .35; }
.urban { fill: #f1eeee; }
.map path { vector-effect: non-scaling-stroke; stroke-linejoin: round; }
.road { fill: none; stroke: #fff; stroke-width: 1.900; }
.casing { fill: none; stroke: #fff; stroke-width: 5.500; }
.highway { fill: none; stroke: #e99a5b; stroke-width: 2.300; }
.admin { fill: none; stroke: #a5a8b8; stroke-width: 1.900; }
.dmz { fill: none; stroke: #a5a8b8; stroke-width: 5; }
.border { fill: none; stroke: #77788c; stroke-width: 2; }
.dots { fill: #000; stroke: #fff; stroke-width: 2; paint-order: stroke; }
.labels { font-family: Roboto, sans-serif; font-size: 28px; fill: #111; stroke: #fff; stroke-width: 5; stroke-opacity: .85; stroke-linejoin: round; paint-order: stroke; }
.capital { font-size: 34px; }
.country { font-size: 36px; font-weight: 600; fill: #000; }
.ocean { font-size: 33px; font-style: italic; fill: #bfdef6; stroke: none; }

/* options panel */
.options { width: 671px; border-left: 3px solid #dedede; }
.tabs { height: 122px; display: flex; border-bottom: 2px solid #e0e0e0; }
.tabs span { flex: none; width: 225px; height: 120px; display: flex; align-items: center; justify-content: center; padding-top: 2px; font-weight: 600; letter-spacing: -1.400px; color: #666; -webkit-text-stroke-width: 0; }
.tabs .active { color: #3d6ff8; border-bottom: 5px solid #3d6ff8; padding-top: 7px; }
.options-body { padding: 60px 20px 0 40px; }
.options h3 { height: 40px; line-height: 42px; font-size: 29px; font-weight: 500; letter-spacing: -1.200px; color: #707a8f; }
.select { margin-top: 54px; width: 588px; height: 112px; border-radius: 30px; background: #fafafa; display: flex; align-items: center; justify-content: space-between; padding: 0 35px 0 30px; }
.type-badge { width: 191px; height: 62px; border-radius: 20px; background: #f1fde6; display: flex; align-items: center; padding-left: 15px; font-size: 27px; font-weight: 500; letter-spacing: -1.200px; color: #6cab37; }
.caret { border: 12px solid transparent; border-top-color: #757575; border-bottom: 0; }
.options .h-settings { margin-top: 54px; }
.required { margin-top: 64px; height: 65px; width: 608px; display: flex; align-items: center; justify-content: space-between; color: #222; letter-spacing: -1.400px; }
.gutter { width: 5px; height: 655px; background: #eee; }

.fab {
  position: absolute; left: 3178px; top: 2012px; width: 150px; height: 150px; border-radius: 50%;
  background: linear-gradient(135deg, #72d0fb 5%, #3671f8 92%); display: flex; align-items: center; justify-content: center;
  box-shadow: 0 6px 12px rgba(0,0,0,.28), 0 2px 36px rgba(0,0,0,.13);
}
.fab svg { width: 80px; height: 65px; stroke: #fff; stroke-width: 31; }
```
